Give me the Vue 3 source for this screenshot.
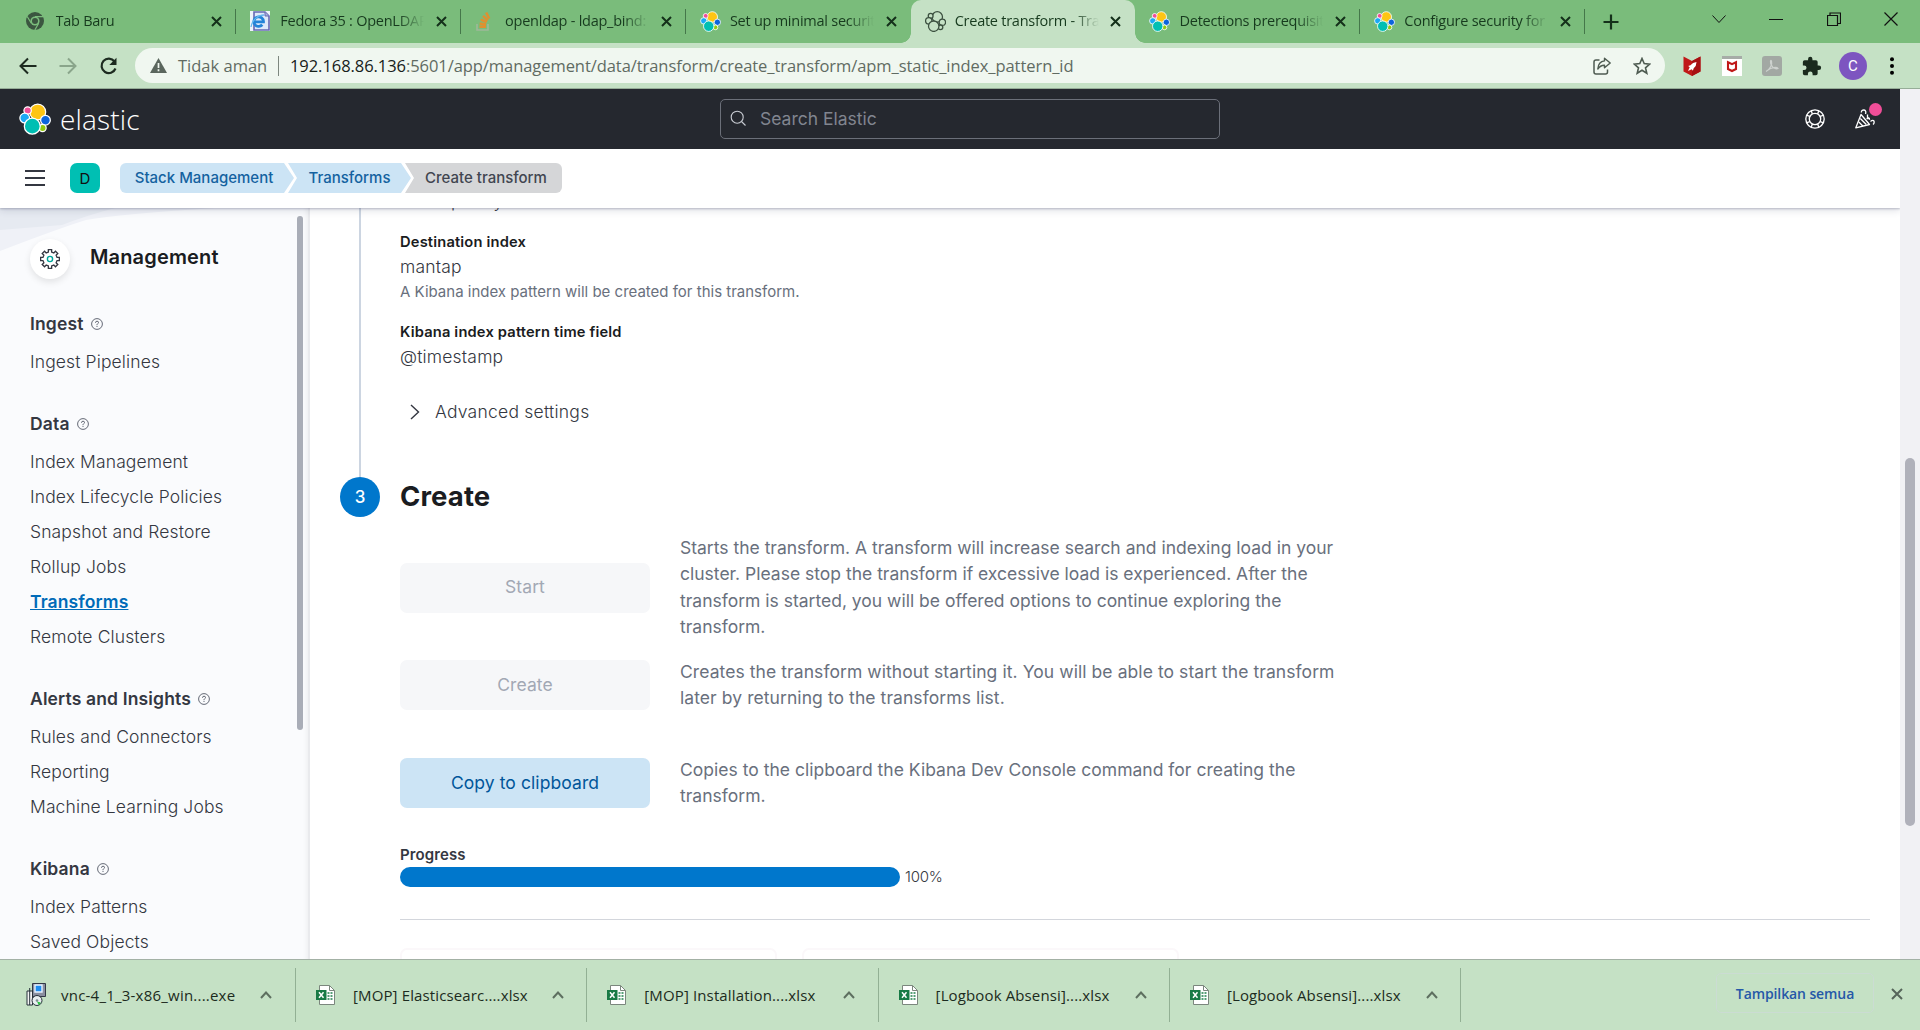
<script setup>
import { h } from 'vue'

const elasticParts = [
  { cx: 18.8, cy: 8.8, r: 8.2, fill: '#fec514' },
  { cx: 8.4, cy: 7.2, r: 3.8, fill: '#f04e98' },
  { cx: 5.4, cy: 15, r: 5, fill: '#1ba9f5' },
  { cx: 26.8, cy: 17.2, r: 5, fill: '#0b64dd' },
  { cx: 23.8, cy: 25.2, r: 3.7, fill: '#93c90e' },
  { cx: 13.2, cy: 23.4, r: 8.2, fill: '#00bfb3' },
]
const ElasticMark = (props) =>
  h('svg', { viewBox: '-0.5 -0.5 33 33', width: props.size, height: props.size },
    elasticParts.map((p) =>
      h('circle', { cx: p.cx, cy: p.cy, r: p.r, fill: props.outline ? '#c5e1c5' : p.fill, stroke: props.outline ? '#3c5040' : '#fff', 'stroke-width': props.outline ? 2 : 1.3 })))
ElasticMark.props = ['size', 'outline']

const tabs = [
  { title: 'Tab Baru', icon: 'chrome' },
  { title: 'Fedora 35 : OpenLDAP', icon: 'ie' },
  { title: 'openldap - ldap_bind:', icon: 'so' },
  { title: 'Set up minimal securit', icon: 'elastic' },
  { title: 'Create transform - Tra', icon: 'outline', active: true },
  { title: 'Detections prerequisit', icon: 'elastic' },
  { title: 'Configure security for', icon: 'elastic' },
]

const groups = [
  { title: 'Ingest', items: ['Ingest Pipelines'] },
  { title: 'Data', items: ['Index Management', 'Index Lifecycle Policies', 'Snapshot and Restore', 'Rollup Jobs', 'Transforms', 'Remote Clusters'] },
  { title: 'Alerts and Insights', items: ['Rules and Connectors', 'Reporting', 'Machine Learning Jobs'] },
  { title: 'Kibana', items: ['Index Patterns', 'Saved Objects'] },
]

const actions = [
  { label: 'Start', cls: 'start', lines: ['Starts the transform. A transform will increase search and indexing load in your', 'cluster. Please stop the transform if excessive load is experienced. After the', 'transform is started, you will be offered options to continue exploring the', 'transform.'] },
  { label: 'Create', cls: 'create', lines: ['Creates the transform without starting it. You will be able to start the transform', 'later by returning to the transforms list.'] },
  { label: 'Copy to clipboard', cls: 'copy', lines: ['Copies to the clipboard the Kibana Dev Console command for creating the', 'transform.'] },
]

const downloads = [
  { name: 'vnc-4_1_3-x86_win....exe', exe: true },
  { name: '[MOP] Elasticsearc....xlsx' },
  { name: '[MOP] Installation....xlsx' },
  { name: '[Logbook Absensi]....xlsx' },
  { name: '[Logbook Absensi]....xlsx' },
]

// Outline of an eight-toothed gear centred on the origin
const gear = (() => {
  const pts = []
  const at = (r, deg) => {
    const a = (deg * Math.PI) / 180
    pts.push((r * Math.cos(a)).toFixed(2) + ' ' + (r * Math.sin(a)).toFixed(2))
  }
  for (let i = 0; i < 8; i++) {
    const d = i * 45
    at(7.2, d - 13); at(9.5, d - 10); at(9.5, d + 10); at(7.2, d + 13)
  }
  return 'M' + pts.join('L') + 'Z'
})()
</script>

<template>
  <div class="window">
    <div class="tabstrip">
      <div v-for="(t, i) in tabs" :key="i" class="tab" :class="{ active: t.active, 'no-sep': i === 3 || i === 4 }">
        <span class="favicon">
          <svg v-if="t.icon === 'chrome'" width="18" height="18" viewBox="0 0 18 18"><circle cx="9" cy="9" r="9" fill="#3b5640" /><circle cx="9" cy="9" r="4.6" fill="#7bbd7c" /><circle cx="9" cy="9" r="3" fill="#3b5640" /><path d="M9 4.700h8M5.300 11.200L1.200 4.500M12.700 11.200L8.800 18" stroke="#7bbd7c" stroke-width="1.200" /></svg>
          <svg v-else-if="t.icon === 'ie'" width="20" height="20" viewBox="0 0 20 20"><path d="M0 0h20v20H0z" fill="#eef4fb" /><path d="M4 1h11l4 4v14H4z" fill="#dfeafa" stroke="#6668b2" stroke-width="1.600" /><path d="M15 1v4h4" fill="#a8b2dd" stroke="#6668b2" /><path d="M4.200 10.800h9.300a4.800 4.800 0 1 0-1.200 3" fill="none" stroke="#2384d8" stroke-width="2.800" /><path d="M1 16C2 9 8 4 14 4" fill="none" stroke="#64b7ee" stroke-width="1.300" /></svg>
          <svg v-else-if="t.icon === 'so'" width="18" height="20" viewBox="0 0 18 20"><path d="M2 13v6h11v-6" fill="none" stroke="#9fb89a" stroke-width="1.600" /><path d="M4.500 15.800h6.500M4.700 12.500l6.400 1M5.800 8.600l6 2.500M8 4.800l4.800 4.600M11.200 1.500l3 6" stroke="#e0902f" stroke-width="2.500" /></svg>
          <ElasticMark v-else :size="21" :outline="t.icon === 'outline'" />
        </span>
        <span class="tab-title">{{ t.title }}</span>
        <svg class="tab-close" width="11" height="11" viewBox="0 0 11 11"><path d="M1 1l9 9M10 1l-9 9" stroke="#14301a" stroke-width="2" /></svg>
      </div>
      <svg class="newtab" width="16" height="16" viewBox="0 0 16 16"><path d="M8 .5v15M.5 8h15" stroke="#14301a" stroke-width="2.200" /></svg>
      <div class="winctl">
        <svg width="14" height="16" viewBox="0 0 14 16"><path d="M.5 4.500L7 11.500l6.500-7" fill="none" stroke="#111" /></svg>
        <svg width="14" height="16" viewBox="0 0 14 16"><path d="M0 8.500h14" stroke="#111" /></svg>
        <svg width="14" height="16" viewBox="0 0 14 16"><path d="M.5 4.500h10v10H.5zM3 4V2h10.500v10.500H11" fill="none" stroke="#111" stroke-width="1.200" /></svg>
        <svg width="14" height="16" viewBox="0 0 14 16"><path d="M.5 1.500l13 13M13.500 1.500l-13 13" stroke="#111" stroke-width="1.200" /></svg>
      </div>
    </div>

    <div class="toolbar">
      <div class="nav">
        <svg width="18" height="18" viewBox="0 0 18 18"><path d="M17.500 9H2M9 1.500L1.500 9 9 16.500" fill="none" stroke="#1d2b20" stroke-width="2" /></svg>
        <svg width="18" height="18" viewBox="0 0 18 18"><path d="M.5 9H16M9 1.500L16.500 9 9 16.500" fill="none" stroke="#8aa58b" stroke-width="2" /></svg>
        <svg width="20" height="18" viewBox="0 0 20 18"><path d="M15.500 4.500A7.200 7.200 0 1 0 16.500 11.500" fill="none" stroke="#1d2b20" stroke-width="2.200" /><path d="M17.500.8v7.200h-7.200z" fill="#1d2b20" /></svg>
      </div>
      <div class="omnibox">
        <svg width="17" height="15" viewBox="0 0 17 15"><path d="M8.500 0L17 15H0z" fill="#5a665d" /><path d="M8.500 5v5M8.500 11.300v2" stroke="#f0f7f0" stroke-width="1.700" /></svg>
        <span class="insecure">Tidak aman</span>
        <i class="bar"></i>
        <span class="url"><b>192.168.86.136</b>:5601/app/management/data/transform/create_transform/apm_static_index_pattern_id</span>
        <svg class="share" width="18" height="18" viewBox="0 0 18 18"><path d="M6.500 3H3Q1 3 1 5v10Q1 17 3 17h9.500q2 0 2-2v-2.500" fill="none" stroke="#4e5b51" stroke-width="1.500" /><path d="M11.500 1.200L17.200 6l-5.700 4.800V8.200Q7.500 8 4.800 12 5.300 4.500 11.500 3.900z" fill="none" stroke="#4e5b51" stroke-width="1.400" stroke-linejoin="round" /></svg>
        <svg width="18" height="18" viewBox="0 0 18 18"><path d="M9 1.500l2.200 5.100 5.500.5-4.200 3.700 1.300 5.400L9 13.300l-4.800 2.900 1.300-5.400L1.300 7.100l5.500-.5z" fill="none" stroke="#4e5b51" stroke-width="1.600" /></svg>
      </div>
      <div class="ext">
        <svg width="20" height="20" viewBox="0 0 20 20"><path d="M1.500.5L10 5l8.500-4.500v15L10 20l-8.500-4.500z" fill="#c01818" /><path d="M10 5l8.500-4.500v15L10 20z" fill="#a70f12" /><path d="M14.500 6q-4 .3-6 3.300l-2.300.6 1.500 1.300L6 15l3.700-1.700 1.200 1.500.8-2.500Q14.500 10 14.500 6z" fill="#fff" /></svg>
        <svg width="20" height="20" viewBox="0 0 20 20"><path d="M0 0h20v20H0z" fill="#fff" /><path d="M0 0h20v3H0z" fill="#a6aca7" /><path d="M6 6.200l4 2 4-2v6.800l-4 2-4-2z" fill="none" stroke="#c01818" stroke-width="2.100" /></svg>
        <svg width="20" height="20" viewBox="0 0 20 20"><rect width="20" height="20" rx="3" fill="#a2a8a3" /><path d="M4 15.500c4-2 6.500-7 5.500-10.500-1.200-1.800-1.500 1.500 0 4.300 1.500 3 4.500 4 6.500 3.200-1.200-2-7-.8-10 1.500" fill="none" stroke="#cdd2ce" stroke-width="1.200" /></svg>
        <svg width="20" height="20" viewBox="1 0 23 23"><path d="M20.500 11H19V7a2 2 0 0 0-2-2h-4V3.500a2.500 2.500 0 0 0-5 0V5H4a2 2 0 0 0-2 2v3.800h1.500a2.700 2.700 0 0 1 0 5.400H2V20a2 2 0 0 0 2 2h3.800v-1.500a2.700 2.700 0 0 1 5.400 0V22H17a2 2 0 0 0 2-2v-4h1.500a2.500 2.500 0 0 0 0-5z" fill="#1a2a1d" /></svg>
        <span class="avatar">C</span>
        <svg width="6" height="18" viewBox="0 0 6 18"><circle cx="3" cy="2.300" r="2" /><circle cx="3" cy="9" r="2" /><circle cx="3" cy="15.700" r="2" /></svg>
      </div>
    </div>

    <div class="viewport">
      <div class="page">
        <header class="topbar">
          <div class="brand"><ElasticMark :size="32" /><span>elastic</span></div>
          <div class="search">
            <svg width="17" height="17" viewBox="0 0 17 17"><circle cx="7.200" cy="7.200" r="6" fill="none" stroke="#c9ccd3" stroke-width="1.100" /><path d="M11.500 11.500l4 4" stroke="#c9ccd3" stroke-width="1.100" /></svg>
            <span>Search Elastic</span>
          </div>
          <div class="top-actions">
            <svg width="20" height="20" viewBox="0 0 20 20"><g fill="none" stroke="#fff" stroke-width="1.300"><circle cx="10" cy="10" r="9.200" /><circle cx="10" cy="10" r="5.700" /><path d="M6.300 1.800l1 3.200M13.700 1.800l-1 3.200M6.300 18.200l1-3.200M13.700 18.200l-1-3.200M1.800 6.300l3.200 1M1.800 13.700l3.200-1M18.200 6.300l-3.200 1M18.200 13.700l-3.200-1" /></g></svg>
            <span class="news">
              <svg width="20" height="20" viewBox="0 0 20 20"><g fill="none" stroke="#fff" stroke-width="1.300" stroke-linejoin="round"><path d="M6 5.500L.8 18.800 14.500 15.500z" /><path d="M5.300 9.500l6 6M3.800 13l4.300 4.200M6.300 3.500Q6.500.8 9 1q2.500.6 1.500 4M15.500 12.500q2.500-2 3.500-.3.600 2-1 3.300M11.500 9.500h3.500M12.500 5.500v2.500l2.500 2.500" /></g></svg>
              <i class="dot"></i>
            </span>
          </div>
        </header>

        <div class="subbar">
          <svg width="20" height="16" viewBox="0 0 20 16"><path d="M0 1h20M0 8h20M0 15h20" stroke="#343741" stroke-width="2" /></svg>
          <span class="space">D</span>
          <nav class="crumbs">
            <span class="crumb c1">Stack Management</span>
            <span class="crumb c2">Transforms</span>
            <span class="crumb c3">Create transform</span>
          </nav>
        </div>

        <div class="body">
          <aside class="sidebar">
            <svg class="waves" width="310" height="60" viewBox="0 0 310 60"><path d="M0 0H215Q120 6 86 12Q60 20 0 43z" fill="#eff1f7" /><path d="M0 0H115Q85 8 62 17L0 22z" fill="#e6eaf1" /></svg>
            <div class="side-head">
              <span class="gear"><svg width="20" height="20" viewBox="-10 -10 20 20"><path :d="gear" fill="none" stroke="#343741" stroke-width="1.300" /><circle r="2.600" fill="none" stroke="#00a69b" stroke-width="1.400" /></svg></span>
              <h2>Management</h2>
            </div>
            <section v-for="g in groups" :key="g.title" class="group">
              <h3>{{ g.title }}
                <svg width="12" height="12" viewBox="0 0 12 12"><circle cx="6" cy="6" r="5.400" fill="none" stroke="#535966" stroke-width=".9" /><path d="M4.500 4.800q0-1.600 1.500-1.600t1.500 1.300q0 .8-.8 1.200T6 7.200M6 8v1" fill="none" stroke="#535966" stroke-width=".9" /></svg>
              </h3>
              <a v-for="it in g.items" :key="it" :class="{ current: it === 'Transforms' }">{{ it }}</a>
            </section>
            <i class="side-thumb"></i>
          </aside>

          <main class="main">
            <div class="step-prev">
              <div class="rail"></div>
              <div class="step-body">
                <p class="value cut">mantap very</p>
                <p class="label first">Destination index</p>
                <p class="value">mantap</p>
                <p class="help">A Kibana index pattern will be created for this transform.</p>
                <p class="label second">Kibana index pattern time field</p>
                <p class="value">@timestamp</p>
                <div class="advanced">
                  <svg width="10" height="16" viewBox="0 0 10 16"><path d="M1 1l7.500 7L1 15" fill="none" stroke="#343741" stroke-width="1.400" /></svg>
                  <span>Advanced settings</span>
                </div>
              </div>
            </div>
            <div class="step-title">
              <span class="num">3</span>
              <h1>Create</h1>
            </div>
            <div class="step-content">
              <div v-for="a in actions" :key="a.label" class="action" :class="a.cls">
                <button>{{ a.label }}</button>
                <p><span v-for="l in a.lines" :key="l">{{ l }}</span></p>
              </div>
              <p class="progress-label">Progress</p>
              <div class="progress"><div class="track"></div><span>100%</span></div>
              <hr />
              <div class="cards"><div class="card"></div><div class="card"></div></div>
            </div>
          </main>
        </div>
      </div>
      <div class="scrollbar"><i></i></div>
    </div>

    <footer class="shelf">
      <div v-for="(d, i) in downloads" :key="i" class="dl" :class="{ exe: d.exe }">
        <svg v-if="d.exe" width="20" height="24" viewBox="0 0 20 24"><path d="M6.500.5h13v13h-13z" fill="#8a8fa0" stroke="#333947" /><path d="M9 2h7v7H9z" fill="#1e8df0" stroke="#e8f4ff" stroke-width="1.400" /><path d="M1 8h5.500v14H1z" fill="#f4f4f4" stroke="#26303a" /><path d="M3.700 5v17" stroke="#26303a" /><circle cx="11" cy="17.500" r="5" fill="#e8eef0" stroke="#26303a" /><circle cx="11" cy="17.500" r="1.300" fill="#7d8a90" /><path d="M11 18.500l3.800 1-2 2.700z" fill="#25c33d" /></svg>
        <svg v-else width="19" height="20" viewBox="0 0 19 20"><path d="M3.500.5h10l5 5v14h-15z" fill="#fff" stroke="#7b867d" /><path d="M13.500.5v5h5" fill="none" stroke="#7b867d" /><path d="M11.500 8h2M14.500 8h2M11.500 11h2M14.500 11h2M11.500 14h2M14.500 14h2" stroke="#1f7f4a" stroke-width="1.700" /><path d="M0 5h10.500v10H0z" fill="#187a45" /><path d="M3 7.300l4.500 5.400M7.500 7.300L3 12.700" stroke="#fff" stroke-width="1.500" /></svg>
        <span>{{ d.name }}</span>
        <svg class="chev" width="12" height="8" viewBox="0 0 12 8"><path d="M1 7l5-5.500L11 7" fill="none" stroke="#5e6f60" stroke-width="2" /></svg>
      </div>
      <button class="show-all">Tampilkan semua</button>
      <svg class="shelf-close" width="12" height="12" viewBox="0 0 12 12"><path d="M1 1l10 10M11 1L1 11" stroke="#56655a" stroke-width="2" /></svg>
    </footer>
  </div>
</template>

<style>
body { overflow: hidden; }
</style>

<style scoped>
* { box-sizing: border-box; }
svg { display: block; flex: none; }
p, h1, h2, h3 { margin: 0; }
.window { width: 1920px; height: 1030px; display: flex; flex-direction: column; overflow: hidden; background: #fff; font-family: "Open Sans", "Noto Sans", sans-serif; }

.tabstrip { height: 43px; flex: none; display: flex; align-items: center; background: #7abc7b; padding-left: 11.500px; }
.tab { width: 224.800px; height: 43px; display: flex; align-items: center; padding: 0 15px 1px 14px; position: relative; font-size: 14.500px; color: #173a1e; flex: none; letter-spacing: -.25px; }
.tab:not(.no-sep)::after { content: ""; position: absolute; right: 0; top: 9px; width: 1px; height: 25px; background: #45774a; }
.tab.active { background: #c5e1c5; border-radius: 10px 10px 0 0; }
.tab.active::before { content: ""; position: absolute; z-index: 1; bottom: 0; left: -10px; right: -10px; height: 10px; background: radial-gradient(circle at 0 0, transparent 9.500px, #c5e1c5 10px) left / 10px 10px no-repeat, radial-gradient(circle at 100% 0, transparent 9.500px, #c5e1c5 10px) right / 10px 10px no-repeat; }
.favicon { width: 30px; display: flex; }
.tab-title { width: 154px; margin: -2px 0 0; flex: none; white-space: nowrap; -webkit-mask-image: linear-gradient(90deg, #000 118px, transparent 144px); mask-image: linear-gradient(90deg, #000 118px, transparent 144px); }
.tab-close { margin-left: auto; margin-right: -1px; }
.newtab { margin-left: 18px; }
.winctl { margin-left: auto; display: flex; gap: 43.500px; padding: 0 22px 5px 0; }

.toolbar { height: 46px; flex: none; display: flex; align-items: center; background: #c5e1c5; border-bottom: 1px solid #96ad98; padding-left: 19px; }
.nav { display: flex; gap: 22px; width: 116px; }
.omnibox { width: 1530px; height: 35px; border-radius: 18px; background: #f0f7f0; display: flex; align-items: center; padding: 0 14px 0 15px; font-size: 16.500px; color: #606b62; white-space: nowrap; flex: none; }
.insecure { margin-left: 11px; width: 88px; }
.bar { width: 1px; height: 20px; background: #7d877f; margin: 0 11px 0 12px; }
.omnibox span { margin-top: -1px; }
.url { letter-spacing: -.062px; }
.url b { font-weight: 400; color: #17211a; }
.share { margin-left: auto; margin-right: 22px; }
.ext { display: flex; align-items: center; gap: 20px; margin-left: 17px; }
.avatar { width: 28px; height: 28px; margin-left: -3px; margin-right: 2px; border-radius: 50%; background: #7d55c0; color: #fff; display: grid; place-items: center; font: 15px Roboto, sans-serif; }

.viewport { flex: 1; min-height: 0; display: flex; font-family: Inter, "Noto Sans", sans-serif; }
.page { width: 1900px; display: flex; flex-direction: column; min-height: 0; }
.scrollbar { width: 20px; background: #f1f1f4; padding: 369px 5px 0; }
.scrollbar i { display: block; height: 368px; border-radius: 5px; background: #b0b1ba; }

.topbar { height: 60px; flex: none; background: #25282f; display: grid; grid-template-columns: 720px 500px 1fr; align-items: center; padding-bottom: 1px; }
.brand { display: flex; align-items: center; padding-left: 19px; gap: 9px; color: #fff; }
.brand span { font: 300 28px/30px "Open Sans", sans-serif; letter-spacing: .15px; }
.search { height: 40px; border: 1px solid #6b6f79; border-radius: 5px; display: flex; align-items: center; padding-left: 9px; gap: 13px; color: #81858f; font-size: 17.500px; }
.top-actions { display: flex; justify-content: flex-end; align-items: center; gap: 30px; padding-right: 25px; }
.news { position: relative; }
.dot { position: absolute; right: -7px; top: -6px; width: 13px; height: 13px; border-radius: 50%; background: #f04e98; }

.subbar { height: 59px; flex: none; display: flex; align-items: center; background: #fff; padding: 0 0 1px 25px; box-shadow: 0 1px 2px rgba(60,65,100,.3), 0 3px 7px rgba(60,65,100,.14); position: relative; z-index: 2; clip-path: inset(0 0 -12px 0); }
.space { width: 30px; height: 30px; margin: 0 20px 0 25px; border-radius: 7px; background: #00bfb3; color: #111; display: grid; place-items: center; font-size: 15px; }
.crumbs { display: flex; height: 30px; font-size: 15px; font-weight: 500; line-height: 30px; text-align: center; }
.crumb { white-space: nowrap; }
.c1 { width: 174px; padding-right: 6px; color: #1462a0; background: #cce4f5; border-radius: 6px 0 0 6px; clip-path: polygon(0 0, 164px 0, 100% 50%, 164px 100%, 0 100%); }
.c2 { width: 123px; margin-left: -6px; color: #1462a0; background: #cce4f5; clip-path: polygon(0 0, 113px 0, 100% 50%, 113px 100%, 0 100%, 9px 50%); }
.c3 { width: 157px; margin-left: -6px; padding-left: 5px; color: #414550; background: #d5d6d8; border-radius: 0 6px 6px 0; clip-path: polygon(0 0, 100% 0, 100% 100%, 0 100%, 9px 50%); }

.body { flex: 1; min-height: 0; display: flex; overflow: hidden; }
.sidebar { width: 310px; flex: none; background: #fafbfd; border-right: 2px solid #e9eaed; position: relative; padding-left: 30px; overflow: hidden; box-shadow: inset -5px 0 5px -4px rgba(0,0,0,.06); }
.waves { position: absolute; left: 0; top: 0; }
.side-head { position: relative; display: flex; align-items: center; height: 98.500px; padding-top: 3px; }
.gear { width: 40px; height: 40px; border-radius: 50%; background: #fff; display: grid; place-items: center; box-shadow: 0 3px 7px rgba(0,0,0,.1); }
h2 { font-size: 20px; line-height: 26px; font-weight: 600; color: #1a1c21; margin: -3px 0 0 20px; letter-spacing: .15px; }
.group { margin-bottom: 27.500px; }
h3 { height: 34px; margin-bottom: 3.500px; display: flex; align-items: center; gap: 7px; font-size: 17.500px; font-weight: 600; color: #343741; letter-spacing: .15px; }
.group a { display: block; height: 35px; line-height: 35px; font-size: 17.500px; font-weight: 300; color: #343741; white-space: nowrap; letter-spacing: .12px; }
.group a.current { font-weight: 600; color: #006bb8; text-decoration: underline; }
.side-thumb { position: absolute; left: 297px; top: 8px; width: 6px; height: 514px; border-radius: 3px; background: #a9adb7; }

.main { flex: 1; min-width: 0; overflow: hidden; background: #fff; color: #343741; padding-left: 30px; }
.step-prev { height: 269px; display: flex; padding-left: 19px; }
.rail { width: 2px; background: #ccd5e1; }
.step-body { margin-left: 39px; }
.value { font-size: 17.500px; line-height: 25px; height: 25px; font-weight: 300; letter-spacing: .18px; }
.cut { margin-top: -20.500px; }
.label { font-size: 14.700px; line-height: 24px; font-weight: 600; color: #1a1c21; letter-spacing: .17px; }
.first { margin-top: 17.500px; }
.help { font-size: 15px; line-height: 26px; color: #69707d; }
.second { margin-top: 15px; }
.advanced { display: flex; align-items: center; gap: 15px; margin: 30px 0 0 10px; font-size: 17.500px; line-height: 25px; font-weight: 300; letter-spacing: .24px; }
.step-title { display: flex; align-items: center; height: 40px; gap: 20px; }
.num { width: 40px; height: 40px; border-radius: 50%; background: #0077cc; color: #fff; display: grid; place-items: center; font-size: 17px; font-weight: 500; }
h1 { font-size: 27.500px; line-height: 36px; margin-top: -2px; font-weight: 700; color: #1a1c21; letter-spacing: .1px; }
.step-content { margin-left: 60px; margin-top: 18px; width: 1470px; }
.action { display: flex; align-items: center; gap: 30px; }
.start { height: 105px; margin-bottom: 19px; }
.create { height: 52px; }
.copy { height: 52px; margin-top: 46px; }
.action p { font-size: 17.500px; line-height: 26.250px; color: #69707d; white-space: nowrap; }
.start p { letter-spacing: 0; }
.create p { letter-spacing: .075px; }
.copy p { letter-spacing: .02px; }
.action p span { display: block; }
.action button { width: 250px; height: 50px; flex: none; border: 0; border-radius: 7px; background: #f6f7f9; color: #a2a8b4; font: 400 17.500px Inter, sans-serif; letter-spacing: .08px; padding: 0 0 2px; }
.copy button { background: #cce4f5; color: #00569a; }
.progress-label { margin-top: 34px; font-size: 15px; line-height: 24px; height: 23.500px; font-weight: 600; letter-spacing: .1px; }
.progress { height: 20px; display: flex; align-items: center; gap: 5px; font-size: 15px; }
.progress span { letter-spacing: -.2px; font-weight: 300; }
.track { width: 500px; height: 20px; border-radius: 10px; background: #0077cc; }
hr { border: 0; height: 1px; background: #d3d6dc; margin: 32px 0 28px; }
.cards { display: flex; gap: 25px; }
.card { width: 377px; height: 60px; border: 2px solid #fbf8fa; border-radius: 7px; }

.shelf { height: 71px; flex: none; display: flex; align-items: center; background: #c5e1c5; border-top: 1px solid #a3b1a5; font-size: 15px; color: #1c2b20; }
.dl { width: 291.300px; height: 54px; border-right: 1px solid #92b094; display: flex; align-items: center; padding-left: 20px; flex: none; letter-spacing: .13px; }
.dl.exe { width: 296px; padding-left: 26px; letter-spacing: .22px; }
.dl span { margin-left: 18px; width: 199px; white-space: nowrap; }
.dl.exe span { margin-left: 15px; width: 199px; }
.show-all { margin: -4px 0 0 auto; width: 158px; height: 40px; border: 1px solid #cbdcd3; border-radius: 5px; background: transparent; color: #2558a8; font: 600 14px "Open Sans", sans-serif; letter-spacing: -.1px; padding: 0; }
.shelf-close { margin: -2px 17px 0 17px; }
</style>
